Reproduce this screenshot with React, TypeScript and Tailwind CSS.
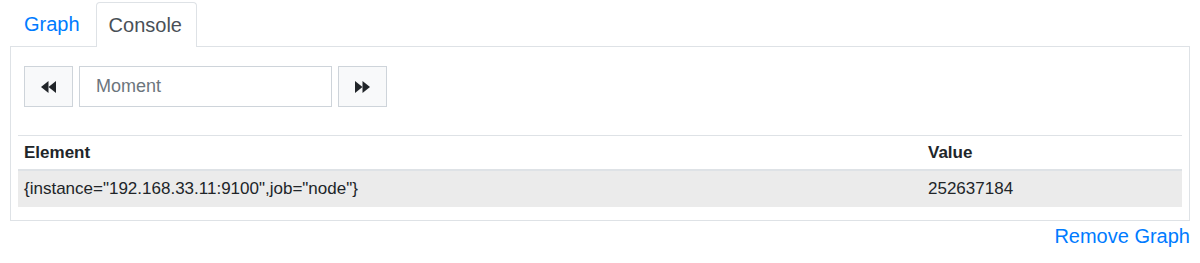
import React from "react";

function Backward() {
  return (
    <svg width="15" height="12" viewBox="0 0 15 12" fill="#212529">
      <polygon points="7.5,0 7.5,12 0,6" />
      <polygon points="15,0 15,12 7.5,6" />
    </svg>
  );
}

function Forward() {
  return (
    <svg width="15" height="12" viewBox="0 0 15 12" fill="#212529">
      <polygon points="0,0 0,12 7.5,6" />
      <polygon points="7.5,0 7.5,12 15,6" />
    </svg>
  );
}

export default function App() {
  return (
    <div
      className="w-[1200px] h-[263px] bg-white px-[10px] pt-[2px] text-[#212529]"
      style={{ fontFamily: '"Liberation Sans", Arial, Helvetica, sans-serif' }}
    >
      <div className="flex items-end h-[44px]">
        <a className="h-[44px] flex items-center px-[13px] border border-transparent text-[20px] text-[#007bff] ml-0">
          Graph
        </a>
        <a className="relative z-10 -mb-px ml-[2px] h-[45px] w-[101px] flex items-center pl-[12px] border border-b-0 border-[#dee2e6] rounded-t-[4px] bg-white text-[20px] text-[#495057]">
          Console
        </a>
      </div>
      <div className="border border-[#dee2e6] px-[7px] pt-[19px] pb-[13px]">
        <div className="flex items-center gap-[6px] ml-[6px] h-[41px]">
          <button className="w-[49px] h-[41px] flex items-center justify-center bg-[#f8f9fa] border border-[#ced4da]">
            <Backward />
          </button>
          <input
            placeholder="Moment"
            className="w-[253px] h-[41px] border border-[#ced4da] pl-[16px] text-[18px] text-[#495057] placeholder:text-[#6c757d] outline-none"
          />
          <button className="w-[49px] h-[41px] flex items-center justify-center bg-[#f8f9fa] border border-[#ced4da]">
            <Forward />
          </button>
        </div>
        <div className="mt-[28px] border-t border-[#dee2e6]">
          <div className="flex h-[35px] items-center border-b-2 border-[#dee2e6] font-bold text-[17px]">
            <div className="flex-1 px-[6px]">Element</div>
            <div className="w-[260px] px-[6px]">Value</div>
          </div>
          <div className="flex h-[36px] items-center bg-[#ebebeb] text-[17px]">
            <div className="flex-1 px-[6px]">{'{instance="192.168.33.11:9100",job="node"}'}</div>
            <div className="w-[260px] px-[6px]">252637184</div>
          </div>
        </div>
      </div>
      <div className="flex justify-end">
        <a className="text-[20px] leading-[30px] text-[#007bff]">Remove Graph</a>
      </div>
    </div>
  );
}
